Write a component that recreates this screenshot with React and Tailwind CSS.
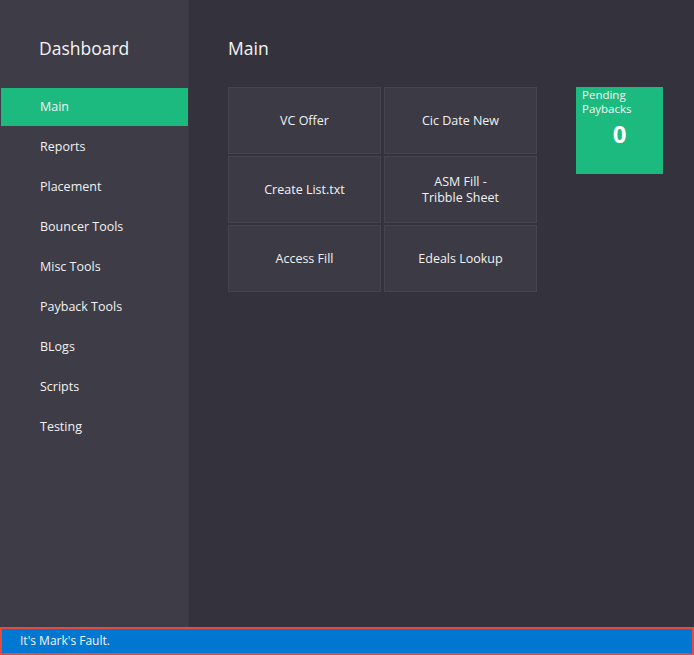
import React from 'react';

const navItems = ['Main', 'Reports', 'Placement', 'Bouncer Tools', 'Misc Tools', 'Payback Tools', 'BLogs', 'Scripts', 'Testing'];

const tiles = [
  ['VC Offer'],
  ['Cic Date New'],
  ['Create List.txt'],
  ['ASM Fill -', 'Tribble Sheet'],
  ['Access Fill'],
  ['Edeals Lookup'],
];

const Tile = ({ lines }) => (
  <button className="bg-[#3b3a45] border border-[#46454f] text-[#f2f2f2] text-[12.5px] leading-[16px] flex flex-col items-center justify-center">
    {lines.map((l) => (
      <span key={l}>{l}</span>
    ))}
  </button>
);

export default function App() {
  return (
    <div className="h-[655px] w-[694px] flex flex-col bg-[#34333d] text-white" style={{ fontFamily: '"Open Sans", "Noto Sans", sans-serif' }}>
      <div className="flex flex-1 min-h-0">
        {/* sidebar */}
        <div className="w-[189px] bg-[#3d3c47] border-r border-[#393842] flex flex-col pt-[34px]">
          <h1 className="pl-[39px] text-[17.5px] leading-[28px] text-[#f4f4f4]">Dashboard</h1>
          <nav className="mt-[26px] flex flex-col">
            {navItems.map((item) => (
              <div
                key={item}
                className={`h-[38px] ml-[1px] mb-[2px] flex items-center pl-[39px] pt-[1px] text-[12.5px] text-[#f2f2f2] ${item === 'Main' ? 'bg-[#1dba80]' : ''}`}
              >
                {item}
              </div>
            ))}
          </nav>
        </div>

        {/* main */}
        <div className="flex-1 pl-[39px] pt-[35px]">
          <h2 className="text-[17.5px] leading-[26px] text-[#f4f4f4]">Main</h2>
          <div className="mt-[26px] flex items-start">
            <div className="grid grid-cols-[153px_153px] auto-rows-[67px] gap-x-[3px] gap-y-[2px]">
              {tiles.map((t) => (
                <Tile key={t.join()} lines={t} />
              ))}
            </div>
            <div className="ml-[39px] w-[87px] h-[87px] bg-[#1dba80] flex flex-col px-[6px] pt-[1px]">
              <span className="text-[11.5px] leading-[14px] text-[#f4f4f4]">Pending</span>
              <span className="text-[11.5px] leading-[14px] text-[#f4f4f4]">Paybacks</span>
              <span className="text-center text-[24px] leading-[30px] font-bold mt-[3px]">0</span>
            </div>
          </div>
        </div>
      </div>

      {/* status bar */}
      <div className="h-[28px] border-2 border-[#e8493e] bg-[#0078d2] flex items-center pl-[18px] text-[12px] text-[#f4f4f4]">
        It's Mark's Fault.
      </div>
    </div>
  );
}
